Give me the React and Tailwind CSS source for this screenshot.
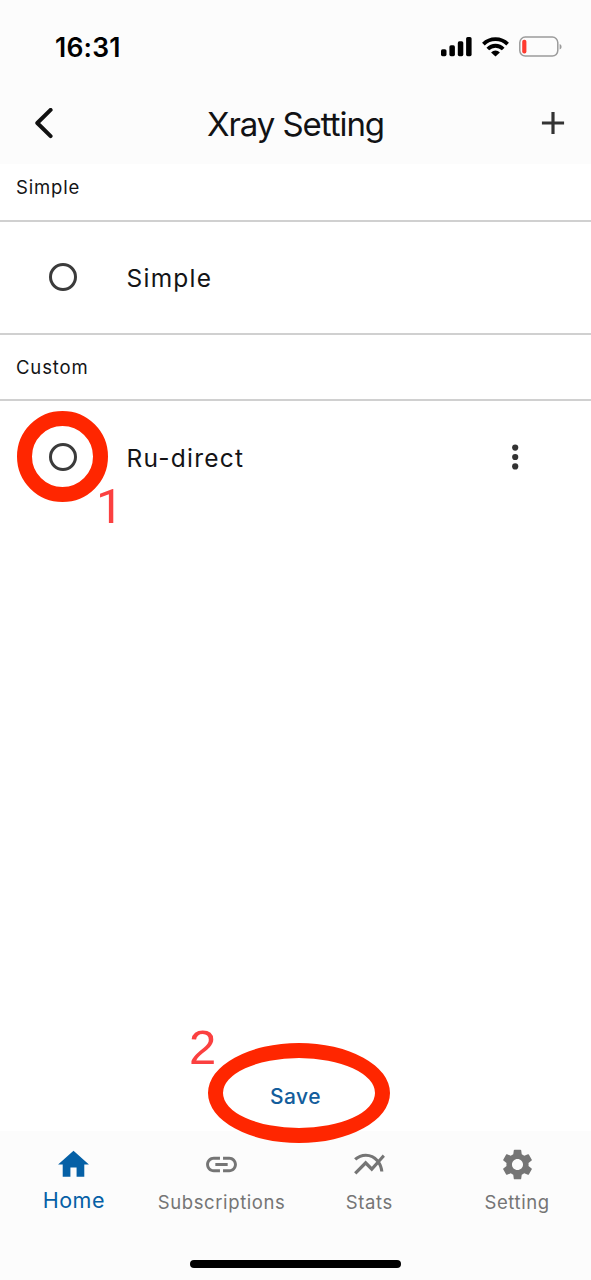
import React from "react";
import { MdHome, MdLink, MdMultilineChart, MdSettings, MdAdd } from "react-icons/md";

function StatusBar() {
  return (
    <div className="flex h-[84px] items-center justify-between pl-[55px] pr-[29px] pt-[10px]">
      <span className="pb-px text-[26.5px] font-semibold leading-8 tracking-[0.2px] text-black">16:31</span>
      <div className="flex items-center">
        <svg className="mr-[10px] h-5 w-[31px]" viewBox="0 0 31 20">
          <rect x="0" y="12.2" width="5.5" height="7" rx="1.6" />
          <rect x="8.4" y="8.3" width="5.5" height="10.9" rx="1.6" />
          <rect x="16.8" y="4.3" width="5.5" height="14.9" rx="1.6" />
          <rect x="25.1" y="0.1" width="5.5" height="19.1" rx="1.6" />
        </svg>
        <svg className="mr-[10px] h-5 w-[27px]" viewBox="0 0 27 20" fill="none" stroke="#000" strokeWidth="3.8">
          <path d="M1.4 7.1a17.2 17.2 0 0 1 24.2 0" />
          <path d="M5.8 12a10.8 10.8 0 0 1 15.4 0" />
          <path d="M9.1 15.4a6.2 6.2 0 0 1 8.8 0L13.5 19.4z" fill="#000" stroke="none" />
        </svg>
        <svg className="h-[22px] w-[43px]" viewBox="0 0 43 22">
          <rect x="0.8" y="1.1" width="38" height="19" rx="5.5" fill="none" stroke="#9b9b9b" strokeWidth="1.5" />
          <rect x="3.2" y="3.8" width="4.2" height="13.6" rx="1.9" fill="#ff3b30" />
          <path d="M40.6 8c2.6.8 2.6 4.8 0 5.6z" fill="#9b9b9b" />
        </svg>
      </div>
    </div>
  );
}

function Header() {
  return (
    <header className="grid h-20 grid-cols-[88px_1fr_88px] items-center">
      <svg className="ml-[34px] h-8 w-5" viewBox="0 0 20 32" fill="none" stroke="#111" strokeWidth="4" strokeLinecap="round" strokeLinejoin="round">
        <path d="M16.6 1.9 3.3 15 16.6 28.1" />
      </svg>
      <h1 className="pb-px text-center text-[33px] font-normal leading-10 tracking-[-1.05px] text-[#121214]">Xray Setting</h1>
      <MdAdd className="mb-[3px] ml-[31px] size-[38px] text-[#333]" />
    </header>
  );
}

function Section({ children }) {
  return <h2 className="px-4 text-[18.5px] font-normal leading-6 tracking-[0.85px] text-[#141416]">{children}</h2>;
}

function Option({ label, children }) {
  return (
    <div className="flex h-[112px] items-center pl-[49px] pr-[57px]">
      <span className="size-7 rounded-full border-[3px] border-[#3b3b3b]" />
      <span className="ml-[49.5px] flex-1 pt-[2px] text-[24.5px] leading-8 tracking-[1.25px] text-[#141416]">{label}</span>
      {children}
    </div>
  );
}

const tabs = [
  { label: "Subscriptions", Icon: MdLink },
  { label: "Stats", Icon: MdMultilineChart },
  { label: "Setting", Icon: MdSettings },
];

export default function App() {
  return (
    <div className="relative flex h-[1280px] w-[591px] flex-col overflow-hidden bg-white font-['Inter',sans-serif]">
      <div className="bg-[#fcfcfc]">
        <StatusBar />
        <Header />
      </div>
      <main className="flex flex-1 flex-col">
        <div className="h-[58px] border-b-2 border-[#d0d0d0] pt-[11px]">
          <Section>Simple</Section>
        </div>
        <div className="-mt-px">
          <Option label="Simple" />
        </div>
        <div className="h-[68px] border-y-2 border-[#d0d0d0] pt-[20px]">
          <Section>Custom</Section>
        </div>
        <Option label="Ru-direct">
          <svg className="h-9 w-9" viewBox="0 0 36 36" fill="#333">
            <circle cx="17.2" cy="8.6" r="3.1" />
            <circle cx="17.2" cy="18" r="3.1" />
            <circle cx="17.2" cy="27.4" r="3.1" />
          </svg>
        </Option>
        <div className="flex flex-1 items-end justify-center pb-[18px]">
          <button className="text-[21px] font-medium leading-8 tracking-[0.4px] text-[#135d9c]">Save</button>
        </div>
      </main>
      <nav className="flex h-[149px] flex-col justify-between bg-[#fcfcfc] pb-[12px] pt-[15px]">
        <div className="grid grid-cols-4 text-[#757575]">
          <div className="flex flex-col items-center text-[#0560a6]">
            <MdHome className="size-[37px]" />
            <span className="text-[21.5px] font-[370] leading-[35px] tracking-[0.55px]">Home</span>
          </div>
          {tabs.map(({ label, Icon }) => (
            <div key={label} className="flex flex-col items-center">
              <Icon className="size-[37px]" />
              <span className="text-[18.5px] font-[370] leading-[38px] tracking-[0.6px]">{label}</span>
            </div>
          ))}
        </div>
        <div className="h-2 w-[211px] self-center rounded-full bg-black" />
      </nav>
      <div className="absolute left-[17px] top-[411px] size-[90.5px] rounded-full border-[15px] border-[#ff2600]" />
      <span className="absolute left-[96px] top-[479px] font-['Roboto',sans-serif] text-[48.5px] leading-[56px] text-[#fb4040]">1</span>
      <div className="absolute left-[208px] top-[1043px] h-[100px] w-[182px] rounded-[50%] border-[15px] border-[#ff2600]" />
      <span className="absolute left-[189px] top-[1019px] font-['Liberation_Sans',sans-serif] text-[49px] leading-[56px] text-[#fb4040]">2</span>
    </div>
  );
}
